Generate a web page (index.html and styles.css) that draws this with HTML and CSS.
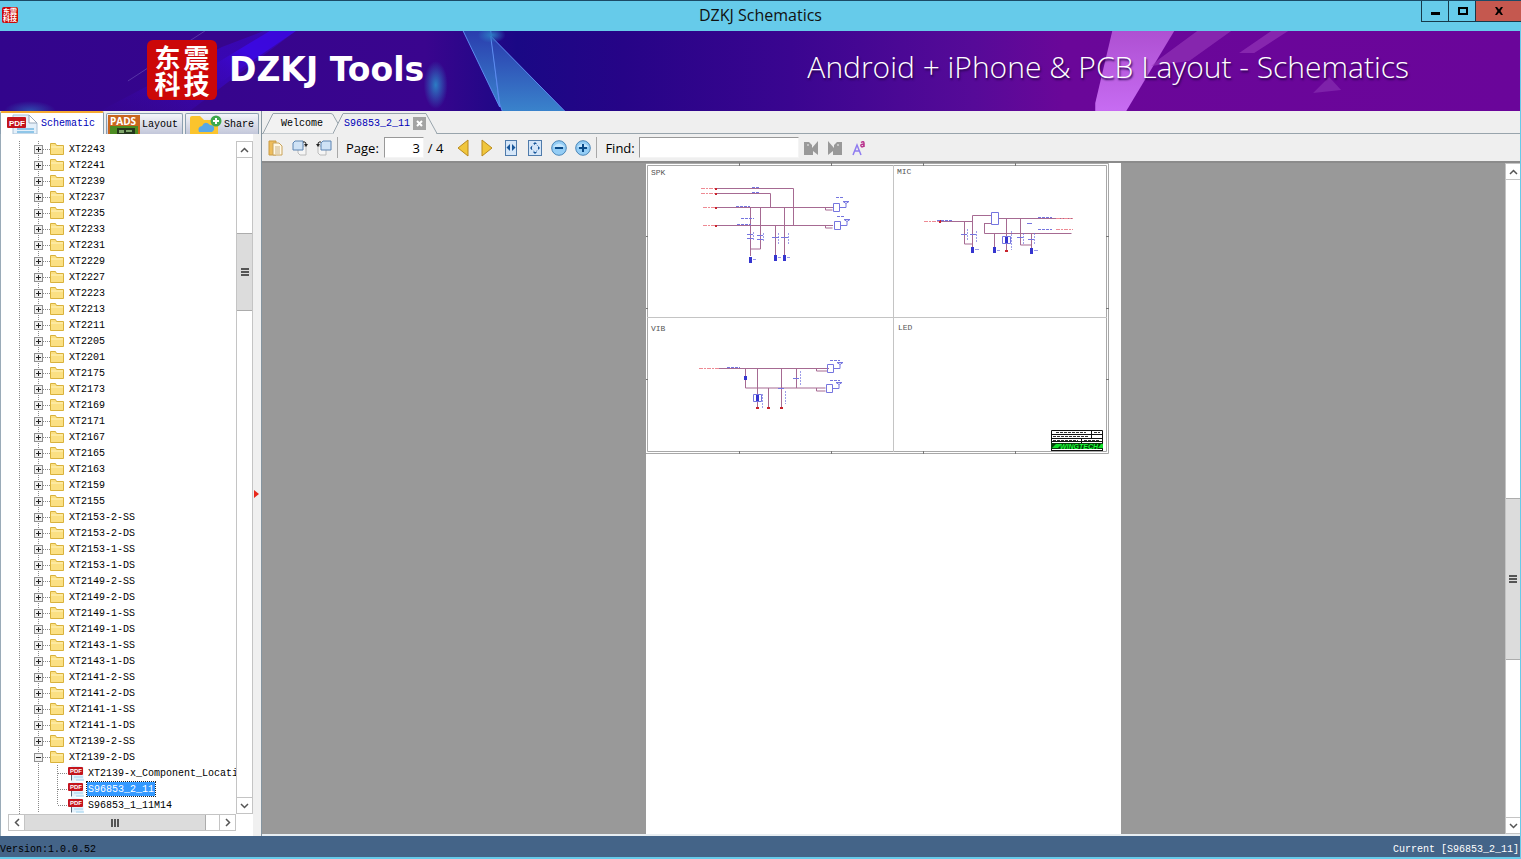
FILE: index.html
```
<!DOCTYPE html>
<html lang="en">
<head>
    <meta charset="UTF-8">
    <meta name="viewport" content="width=device-width, initial-scale=1.0">
    <title>DZKJ Schematics</title>
    <link rel="stylesheet" href="styles.css">
</head>
<body>
    <header class="titlebar">
        <div class="app-icon"><span>东</span><span>震</span><span>科</span><span>技</span></div>
        <h1>DZKJ Schematics</h1>
        <div class="window-buttons">
            <button aria-label="Minimize"><svg width="11" height="11"><path d="M1 6h9v3H1z"/></svg></button>
            <button aria-label="Maximize"><svg width="11" height="11"><path fill-rule="evenodd" d="M1 1h10v8H1zM3 3v4h6V3z"/></svg></button>
            <button class="close" aria-label="Close"><svg width="10" height="10"><path d="M1 1h2l2 2.500 2-2.500h2L6.500 5 9 9H7L5 6.500 3 9H1l2.500-4z"/></svg></button>
        </div>
    </header>

    <div class="banner">
        <svg class="banner-art" viewBox="0 0 1521 80" preserveAspectRatio="none" aria-hidden="true">
            <defs>
                <linearGradient id="base">
                    <stop offset="0" stop-color="#32058c"/>
                    <stop offset=".28" stop-color="#3a058e"/>
                    <stop offset=".34" stop-color="#1a0885"/>
                    <stop offset=".41" stop-color="#260487"/>
                    <stop offset=".52" stop-color="#3a0590"/>
                    <stop offset=".64" stop-color="#560a98"/>
                    <stop offset=".7" stop-color="#6a0799"/>
                    <stop offset="1" stop-color="#6a059a"/>
                </linearGradient>
                <linearGradient id="beam" x1="0" y1="1" x2="1" y2="0">
                    <stop offset="0" stop-color="#3d06b8" stop-opacity=".1"/>
                    <stop offset=".5" stop-color="#3b08e0"/>
                    <stop offset="1" stop-color="#3b08d8"/>
                </linearGradient>
                <linearGradient id="glass" x1="0" y1="0" x2="0" y2="1">
                    <stop offset="0" stop-color="#2a3cae"/>
                    <stop offset="1" stop-color="#3a84cc"/>
                </linearGradient>
                <linearGradient id="pink" x1="0" y1="0" x2="0" y2="1">
                    <stop offset="0" stop-color="#ae50d2"/>
                    <stop offset="1" stop-color="#c76cf2"/>
                </linearGradient>
                <radialGradient id="glow">
                    <stop offset="0" stop-color="#2c7cc4"/>
                    <stop offset="1" stop-color="#2c7cc4" stop-opacity="0"/>
                </radialGradient>
            </defs>
            <rect width="1521" height="80" fill="url(#base)"/>
            <path d="M100 80 222 16 264 0h32L190 80z" fill="url(#beam)" opacity=".45"/>
            <path d="M217 32 270 0h26L217 54z" fill="url(#beam)"/>
            <path d="m128 50 77-50" stroke="#6e55b8" opacity=".6"/>
            <ellipse cx="436" cy="54" rx="12" ry="24" fill="url(#glow)"/>
            <ellipse cx="30" cy="80" rx="26" ry="10" fill="url(#glow)" opacity=".6"/>
            <g fill="url(#glass)" stroke="#5c8cf0">
                <path d="M463-1h28l9 77z"/>
                <path d="m491 5 75 76h-63l-3-8z"/>
            </g>
            <ellipse cx="492" cy="4" rx="14" ry="8" fill="url(#glow)"/>
            <path d="M1113 0h62l-48 80h-31v-8z" fill="url(#pink)"/>
            <path d="m1160 28 38-28h34l-42 30-38 5zM1240 22l32-22h17l-34 22z" fill="#9a3cbc" opacity=".6"/>
            <path d="m1314 62 16-16 12 13z" fill="#7e22aa"/>
        </svg>
        <div class="logo"><span>东</span><span>震</span><span>科</span><span>技</span></div>
        <div class="brand">DZKJ Tools</div>
        <div class="slogan">Android + iPhone &amp; PCB Layout - Schematics</div>
    </div>

    <main>
        <aside>
            <div class="side-tabs">
                <button class="side-tab active">
                    <svg width="32" height="20" viewBox="0 0 32 20">
                        <path d="M6 1h16l8 8v11H6z" fill="#e4f0fa" stroke="#a9c2d8"/>
                        <path d="M22 1v8h8z" fill="#fff" stroke="#9ab"/>
                        <path d="M10 15h17M10 18h17" stroke="#8fc6e8" stroke-width="2"/>
                        <rect y="3" width="19" height="11" rx="1" fill="#c4141c"/>
                        <text x="2" y="12" font-size="8" font-weight="bold" fill="#fff" font-family="Liberation Sans, sans-serif">PDF</text>
                    </svg>
                    Schematic
                </button>
                <button class="side-tab">
                    <svg width="32" height="20" viewBox="0 0 32 20">
                        <path d="M0 1h32v19H0z" fill="#c9661e"/>
                        <path d="M2 12h28v8H2z" fill="#4c8c22"/>
                        <path d="M9 14h18v6H9z" fill="#23371c"/>
                        <path d="M11 16h5v3h-5zM18 16h6v2h-6z" fill="#7fa66b"/>
                        <text x="2" y="11" font-size="10" font-weight="bold" fill="#fff" font-family="Open Sans, sans-serif">PADS</text>
                    </svg>
                    Layout
                </button>
                <button class="side-tab">
                    <svg width="32" height="20" viewBox="0 0 32 20">
                        <path d="M0 20V4q0-2 2-2h8l4 4h11q3 0 3 3v11z" fill="#fbc42d"/>
                        <path d="M9 18q-2-5 3-6 3-6 8-1 5 0 4 5l-2 2z" fill="#58a8e8"/>
                        <circle cx="26" cy="7" r="5.500" fill="#3ea94c"/>
                        <path d="M26 4v6M23 7h6" stroke="#fff" stroke-width="2"/>
                    </svg>
                    Share
                </button>
            </div>
            <div class="tree-panel">
                <ul class="tree" id="tree"></ul>
                <div class="scrollbar vertical">
                    <button aria-label="Scroll up"><svg width="9" height="6"><path d="m1 5 3.500-3.500L8 5"/></svg></button>
                    <div class="before"></div>
                    <div class="thumb"><i></i></div>
                    <div class="after"></div>
                    <button aria-label="Scroll down"><svg width="9" height="6"><path d="m1 1 3.500 3.500L8 1"/></svg></button>
                </div>
                <div class="scrollbar horizontal">
                    <button aria-label="Scroll left"><svg width="6" height="9"><path d="M5 1 1.500 4.500 5 8"/></svg></button>
                    <div class="thumb"><i></i></div>
                    <div class="after"></div>
                    <button aria-label="Scroll right"><svg width="6" height="9"><path d="m1 1 3.500 3.500L1 8"/></svg></button>
                </div>
                <div class="splitter"><svg width="5" height="8"><path d="m0 0 5 4-5 4z" fill="#e8281c"/></svg></div>
            </div>
        </aside>

        <section class="workspace">
            <div class="doc-tabs">
                <button class="doc-tab welcome">
                    <svg width="76" height="22"><path d="M0 21.500h1L11 1.500h58q2 0 3 3l4 7v10" fill="#f2f2f2" stroke="#98a4ac"/></svg>
                    <span>Welcome</span>
                </button>
                <div class="doc-tab current">
                    <svg width="104" height="22"><path d="M0 21.500 10 1.500h83l11 20" fill="#efefef" stroke="#98a4ac"/><path d="M1 22h102" stroke="#efefef" stroke-width="2"/></svg>
                    <button class="doc-name">S96853_2_11</button>
                    <button class="doc-close" aria-label="Close tab"><svg width="7" height="7"><path d="m1 1 5 5m0-5L1 6" stroke="#fff" stroke-width="2"/></svg></button>
                </div>
            </div>

            <div class="toolbar">
                <button class="tool" aria-label="Open">
                    <svg width="16" height="16"><path d="M1 1h7v14H1z" fill="#eebd5c" stroke="#c99b45"/><path d="M5 3h6l3 3v9H5z" fill="#fff8e6" stroke="#c9a35a"/><path d="M7 7h5M7 9h5M7 11h5M7 13h5" stroke="#cbb48a"/></svg>
                </button>
                <button class="tool" aria-label="Rotate right">
                    <svg width="16" height="16"><path d="M6 6h8v9H8l-2-2z" fill="#f5f5f5" stroke="#bbb"/><path d="M3 1h8v9H1V3z" fill="#cfe2f5" stroke="#5d84b2"/><path d="M11 2h2q1 0 1 3" fill="none" stroke="#222"/><path d="M12 4h4l-2 3z" fill="#222"/></svg>
                </button>
                <button class="tool" aria-label="Rotate left">
                    <svg width="16" height="16"><path d="M2 6h8v9H4l-2-2z" fill="#f5f5f5" stroke="#bbb"/><path d="M7 1h8v9H5V3z" fill="#cfe2f5" stroke="#5d84b2"/><path d="M5 2H3Q2 2 2 5" fill="none" stroke="#222"/><path d="M0 4h4L2 7z" fill="#222"/></svg>
                </button>
                <span class="separator"></span>
                <label for="page">Page:</label>
                <input id="page" class="page" type="text" value="3">
                <span class="total">/ 4</span>
                <button class="tool" aria-label="Previous page">
                    <svg width="16" height="18"><path d="M13 1v16L3 9z" fill="#f0c63c" stroke="#b98a1d"/></svg>
                </button>
                <button class="tool" aria-label="Next page">
                    <svg width="16" height="18"><path d="M3 1v16l10-8z" fill="#f0c63c" stroke="#b98a1d"/></svg>
                </button>
                <button class="tool" aria-label="Fit width">
                    <svg width="16" height="18"><rect x="2.500" y="1.500" width="11" height="15" fill="#d5e6f8" stroke="#4f7bab"/><path d="M7 5v7L3.500 8.500zM9 5v7l3.500-3.500z" fill="#17569a"/></svg>
                </button>
                <button class="tool" aria-label="Fit page">
                    <svg width="16" height="18"><rect x="1.500" y="1.500" width="13" height="15" fill="#d5e6f8" stroke="#4f7bab"/><path d="m8 3 2 2H6zM8 15l2-2H6zM3 9l2-2v4zM13 9l-2-2v4z" fill="#17569a"/><circle cx="8" cy="9" r="3.500" fill="none" stroke="#17569a" stroke-dasharray="1 2"/></svg>
                </button>
                <button class="tool" aria-label="Zoom out">
                    <svg width="16" height="16"><circle cx="8" cy="8" r="7.300" fill="#94cdf5" stroke="#4a86b8"/><path d="M2 7q6-7 12 0" fill="#c4e5fc"/><path d="M4 8h8" stroke="#0a4a88" stroke-width="2"/></svg>
                </button>
                <button class="tool" aria-label="Zoom in">
                    <svg width="16" height="16"><circle cx="8" cy="8" r="7.300" fill="#94cdf5" stroke="#4a86b8"/><path d="M2 7q6-7 12 0" fill="#c4e5fc"/><path d="M4 8h8M8 4v8" stroke="#0a4a88" stroke-width="2"/></svg>
                </button>
                <span class="separator"></span>
                <label for="find">Find:</label>
                <input id="find" class="find" type="text">
                <button class="tool" aria-label="Find previous">
                    <svg width="16" height="16"><path d="M1 2h5l3 3v3l6-7v14l-5-4v4H1z" fill="#999"/><path d="M4 4h2v2H4z" fill="#c4c4c4"/></svg>
                </button>
                <button class="tool" aria-label="Find next">
                    <svg width="16" height="16"><path d="M15 2h-5L7 5v3L1 1v14l5-4v4h9z" fill="#999"/><path d="M10 4h2v2h-2z" fill="#c4c4c4"/></svg>
                </button>
                <button class="tool" aria-label="Match case">
                    <svg width="16" height="16"><path d="m2 15 4-10 4 10M3.500 11h5" fill="none" stroke="#8f7cf0" stroke-width="1.500"/><path d="M10 2.500q3-2 3 1V7m0-3q-4 0-3 2 1 2 3-.500" fill="none" stroke="#b8328c" stroke-width="1.500"/></svg>
                </button>
            </div>

            <div class="viewer">
                <div class="canvas">
                    <div class="paper">
                        <svg class="sheet" viewBox="0 0 475 292">
                            <g fill="none" stroke="#a8a8a8">
                                <path d="M0 .500h462.500v290H0M1.500 2.500h459v286H1.500z"/>
                                <path d="M1 154.500h460M247.500 2v287" stroke="#c4c4c4"/>
                                <path d="M93.500 0v3M185.500 0v3M277.500 0v3M369.500 0v3M93.500 288v3M185.500 288v3M277.500 288v3M369.500 288v3M0 73.500h2M0 145.500h2M0 216.500h2M460 73.500h3M460 145.500h3M460 216.500h3" stroke="#777"/>
                            </g>
                            <g class="sheet-label">
                                <text x="5" y="12">SPK</text>
                                <text x="251" y="11">MIC</text>
                                <text x="5" y="168">VIB</text>
                                <text x="252" y="167">LED</text>
                            </g>
                            <!-- nets -->
                            <g fill="none" stroke="#a66a92">
                                <path d="M70 25.500h77.500v37M70 30.500h54.500v14M70 44.500h117M70 62.500h117M104.500 44v49M114.500 44v42h-10M129.500 62v30M138.500 44v48M179.500 44v3h7M179.500 62v3h7"/>
                                <path d="M294 58.500h32M345 52.500h-18.500v34M318.500 58v23h8M338.500 60.500h7M338.500 60v10.500h87M353 55.500h73M348.500 70v16M360.500 55v32M374.500 55v27h11M385.500 70v17"/>
                                <path d="M73 205.500h110M99.500 205v20h80M111.500 205v40M122.500 225v20M135.500 205v40M150.500 205v20M170.500 205v3h11M170.500 225v3h9"/>
                            </g>
                            <g stroke="#ee8a94" stroke-dasharray="4 1 2 1">
                                <path d="M55 25.500h15M55 30.500h15M57 44.500h13M57 62.500h13M278 58.500h15M410 55.500h17M410 66.500h17M53 205.500h20"/>
                            </g>
                            <g fill="#c8232c">
                                <path d="M69 25h2v2h-2zM69 30h2v2h-2zM69 44h2v2h-2zM69 62h2v2h-2zM293 57h2v3h-2zM359 87h3v2h-3zM110 244h3v2h-3zM121 244h3v2h-3zM134 244h3v2h-3z"/>
                            </g>
                            <!-- parts -->
                            <g fill="none" stroke="#7575df">
                                <path d="M187.500 40.500h6v8h-6zM188.500 58.500h6v8h-6zM181.500 201.500h6v8h-6zM180.500 221.500h6v8h-6zM345.500 49.500h7v12h-7z"/>
                                <path d="M194 44.500h6v-4m-3-2h6l-3 2zM195 62.500h6v-4m-3-2h6l-3 2zM188 205.500h6v-4m-3-2h6l-3 2zM187 225.500h6v-4m-3-2h6l-3 2z"/>
                                <path d="M101 71.500h6M101 75.500h6M111 72.500h6M111 76.500h6M126 74.500h7M135 74.500h7M315 71.500h6M324 71.500h6M371 74.500h6M382 76.500h6M381 60.500h5M132 225.500h6M147 215.500h6M356.500 73.500h8v7h-8zM107.500 231.500h8v7h-8z"/>
                                <path d="M90 43.500h14M91 61.500h14M106 24.500h8M106 29.500h8M95 55.500h13M190 34.500h8M191 53.500h8M184 197.500h10M184 217.500h10M291 57.500h15M392 54.500h14M392 66.500h14M81 204.500h13" stroke-dasharray="3 1"/>
                                <path d="M107.500 69v9M117.500 70v9M132.500 70v12M142.500 70v12M321.500 66v12M330.500 68v12M377.500 70v12M388.500 70v12M365.500 68v19M116.500 231v14M139.500 228v13M154.500 208v14" stroke-dasharray="2 1" opacity=".7"/>
                            </g>
                            <g fill="#3535cf">
                                <path d="M103 94h3v6h-3zM128 92h3v6h-3zM137 92h3v6h-3zM325 84h3v6h-3zM347 84h3v6h-3zM384 85h3v6h-3zM359 74h3v6h-3zM110 232h3v6h-3zM98 213h3v4h-3z"/>
                                <path d="M107 96h3v1h-3zM132 94h3v1h-3zM141 94h3v1h-3zM329 86h4v1h-4zM351 87h3v1h-3zM388 87h4v1h-4z" opacity=".5"/>
                            </g>
                            <!-- title block -->
                            <g>
                                <path d="M405.500 267.500h51v20h-51zM405 271.500h51M405 275.500h51M405 278.500h51M445.500 267v8M435.500 276v5" fill="#fff" stroke="#111"/>
                                <path d="M410 269.500h30M448 269.500h6M407 273.500h36M407 277.500h25M438 277.500h15" stroke="#333" stroke-dasharray="3 1"/>
                                <path d="M405 280h52v6h-52z" fill="#053d0a"/>
                                <path d="m406 285 4-4h6l-4 4zM452 285l3-4h2v4z" fill="#12e02c"/>
                                <text x="414" y="286" font-size="7" font-weight="bold" font-style="italic" fill="#1cff3a" font-family="Liberation Sans, sans-serif">WINGTECH</text>
                                <path d="M405 287.500h52" stroke="#111" stroke-dasharray="5 1"/>
                            </g>
                        </svg>
                    </div>
                </div>
                <div class="scrollbar vertical page-scroll">
                    <button aria-label="Scroll up"><svg width="9" height="6"><path d="m1 5 3.500-3.500L8 5"/></svg></button>
                    <div class="before"></div>
                    <div class="thumb"><i></i></div>
                    <div class="after"></div>
                    <button aria-label="Scroll down"><svg width="9" height="6"><path d="m1 1 3.500 3.500L8 1"/></svg></button>
                </div>
            </div>
        </section>
    </main>

    <footer>
        <span class="version">Version:1.0.0.52</span>
        <span>Current [S96853_2_11]</span>
    </footer>

    <script>
        const folders = [
            'XT2243', 'XT2241', 'XT2239', 'XT2237', 'XT2235', 'XT2233', 'XT2231', 'XT2229',
            'XT2227', 'XT2223', 'XT2213', 'XT2211', 'XT2205', 'XT2201', 'XT2175', 'XT2173',
            'XT2169', 'XT2171', 'XT2167', 'XT2165', 'XT2163', 'XT2159', 'XT2155',
            'XT2153-2-SS', 'XT2153-2-DS', 'XT2153-1-SS', 'XT2153-1-DS',
            'XT2149-2-SS', 'XT2149-2-DS', 'XT2149-1-SS', 'XT2149-1-DS',
            'XT2143-1-SS', 'XT2143-1-DS', 'XT2141-2-SS', 'XT2141-2-DS',
            'XT2141-1-SS', 'XT2141-1-DS', 'XT2139-2-SS', 'XT2139-2-DS'
        ];
        const files = ['XT2139-x_Component_Location', 'S96853_2_11', 'S96853_1_11M14'];
        const openFolder = 'XT2139-2-DS';
        const selected = 'S96853_2_11';

        const folderIcon = '<svg class="folder" width="14" height="12"><path d="M.5 11.500v-11h5l1 2h7v9z" fill="#fbe083" stroke="#d9b23c"/><path d="M1 4h12" stroke="#fff3bd"/></svg>';
        const pdfIcon = '<svg class="pdf" width="16" height="16"><path d="M3.500 0v15.500h12V2" fill="#e3f1fb"/><path d="M3.500 10v5.500" stroke="#567"/><path d="M6 12h9M8 15h8" stroke="#9fd2ee"/><rect y="2" width="15" height="8" rx="1" fill="#c4141c"/><text x="2" y="8" font-size="6" font-weight="bold" fill="#fff" font-family="Liberation Sans, sans-serif">PDF</text></svg>';

        let rows = '';
        folders.forEach(function(name) {
            const open = name === openFolder;
            rows += '<li><button class="toggle' + (open ? ' open' : '') + '" aria-label="Toggle ' + name + '"></button>' +
                '<span class="branch"></span>' + folderIcon + '<span class="name">' + name + '</span></li>';
        });
        files.forEach(function(name, i) {
            rows += '<li class="file' + (i === files.length - 1 ? ' last' : '') + '"><span class="branch"></span>' + pdfIcon +
                '<span class="name' + (name === selected ? ' selected' : '') + '">' + name + '</span></li>';
        });
        document.getElementById('tree').innerHTML = rows;
    </script>
</body>
</html>
```
FILE: styles.css
```
* {
    box-sizing: border-box;
}
body {
    display: flex;
    flex-direction: column;
    height: 100vh;
    margin: 0;
    overflow: hidden;
    background-color: #66cbea;
    font-family: "Liberation Mono", monospace;
    font-size: 10px;
    color: #000;
}
button {
    padding: 0;
    border: none;
    background: none;
    font: inherit;
    color: inherit;
}
svg {
    display: block;
    flex: none;
}

/* window title */
.titlebar {
    display: grid;
    grid-template-columns: 1fr auto 1fr;
    height: 31px;
    flex: none;
    border-top: 1px solid #1b4a66;
}
.titlebar h1 {
    margin: 0;
    font: 16px/29px "Open Sans", sans-serif;
    color: #111;
}
.app-icon, .logo {
    display: grid;
    grid-template-columns: 1fr 1fr;
    background-color: #cc0808;
    color: #fff;
    font-family: "Noto Sans CJK SC", sans-serif;
    font-weight: bold;
    text-align: center;
}
.app-icon {
    width: 16px;
    height: 16px;
    margin: 6px 0 0 2px;
    padding: 1px;
    border-radius: 2px;
    font-size: 7px;
    line-height: 7px;
}
.window-buttons {
    display: flex;
    justify-self: end;
    height: 21px;
    border: 1px solid #16384a;
    border-width: 0 0 1px 1px;
}
.window-buttons button {
    display: grid;
    place-items: center;
    width: 27px;
    border-right: 1px solid #16384a;
}
.window-buttons .close {
    width: 45px;
    border: none;
    background-color: #c5584f;
}

/* banner */
.banner {
    position: relative;
    display: flex;
    align-items: center;
    height: 80px;
    flex: none;
    margin-right: 1px;
    padding: 0 111px 2px 147px;
    color: #fff;
}
.banner-art {
    position: absolute;
    inset: 0;
    width: 100%;
    height: 100%;
}
.logo, .brand, .slogan {
    position: relative;
}
.logo {
    width: 70px;
    height: 60px;
    padding: 4px 6px;
    border-radius: 6px;
    font-size: 26px;
    line-height: 26px;
}
.brand {
    margin-left: 12px;
    font: bold 33px/40px "DejaVu Sans", sans-serif;
}
.slogan {
    margin-left: auto;
    font: 300 30px/36px "Open Sans", sans-serif;
    text-shadow: 1px 2px 2px #2a0550;
    padding-bottom: 6px;
}

main {
    display: flex;
    flex: 1;
    min-height: 0;
    margin-right: 1px;
    background-color: #efefef;
}

/* left panel */
aside {
    display: flex;
    flex-direction: column;
    width: 262px;
    flex: none;
    border-right: 1px solid #8595a0;
}
.side-tabs {
    display: flex;
    align-items: flex-end;
    gap: 2px;
    height: 23px;
}
.side-tab {
    display: flex;
    align-items: center;
    gap: 2px;
    height: 21px;
    padding: 0 4px 0 1px;
    border: 1px solid #8b9fb0;
    border-bottom: none;
    border-radius: 2px 2px 0 0;
    background: linear-gradient(#f4f5f9, #c3c7da);
}
.side-tab:last-child {
    padding: 0 4px;
}
.side-tab.active {
    height: 23px;
    padding: 0 8px 0 6px;
    border-top: 2px solid #f5a930;
    background: #fff;
    color: #0000b8;
}
.tree-panel {
    display: grid;
    grid-template-columns: 1fr 17px 8px;
    grid-template-rows: 1fr 17px;
    flex: 1;
    min-height: 0;
    padding: 7px 0 5px 7px;
    border-left: 1px solid #9aabb8;
    background: linear-gradient(90deg, #fff 252px, #f0f0f0 252px);
}
.tree {
    margin: 0 0 0 1px;
    padding: 0;
    overflow: hidden;
    list-style: none;
    min-height: 0;
    background: repeating-linear-gradient(#888 0 1px, transparent 1px 2px) 10px 0 / 1px 100% no-repeat;
}
.tree li {
    position: relative;
    display: flex;
    align-items: center;
    height: 16px;
    padding-left: 25px;
    background: repeating-linear-gradient(#888 0 1px, transparent 1px 2px) 29px 0 / 1px 100% no-repeat;
    white-space: nowrap;
}
.toggle {
    width: 9px;
    height: 9px;
    flex: none;
    border: 1px solid #919191;
    background:
        linear-gradient(#222, #222) center / 5px 1px no-repeat,
        linear-gradient(#222, #222) center / 1px 5px no-repeat,
        #f0f0f0;
}
.toggle.open {
    background: linear-gradient(#222, #222) center / 5px 1px no-repeat, #f0f0f0;
}
.branch {
    width: 7px;
    height: 1px;
    flex: none;
    background: repeating-linear-gradient(90deg, #888 0 1px, transparent 1px 2px);
}
.tree .name {
    margin-left: 4px;
    padding: 2px 1px 0;
    line-height: 12px;
}
.file .branch {
    width: 10px;
}
.tree .file {
    padding-left: 49px;
    background:
        repeating-linear-gradient(#888 0 1px, transparent 1px 2px) 29px 0 / 1px 100% no-repeat,
        repeating-linear-gradient(#888 0 1px, transparent 1px 2px) 48px 0 / 1px 100% no-repeat;
}
.tree .last {
    background-size: 1px 100%, 1px 8px;
}
.tree .file .name {
    margin-left: 3px;
}
.name.selected {
    outline: 1px dotted #222;
    background-color: #3399ff;
    color: #fff;
}
.splitter {
    grid-column: 3;
    grid-row: 1;
    display: flex;
    align-items: center;
    padding: 33px 0 0 1px;
}

/* scroll bars */
.scrollbar {
    display: flex;
    background-color: #fff;
}
.scrollbar button {
    display: grid;
    place-items: center;
    width: 17px;
    height: 17px;
    flex: none;
    border: 1px solid #c4c4c4;
}
.scrollbar svg {
    fill: none;
    stroke: #555;
    stroke-width: 1.5;
}
.vertical {
    flex-direction: column;
    border: 1px solid #c4c4c4;
    border-width: 0 1px;
}
.vertical button {
    width: 100%;
    border-width: 1px 0;
}
.horizontal {
    border: 1px solid #c4c4c4;
    border-width: 1px 0;
}
.horizontal button {
    height: 100%;
    border-width: 0 1px;
}
.thumb {
    display: grid;
    place-items: center;
    border: 1px solid #acacac;
    background-color: #dcdcdc;
}
.vertical .thumb {
    flex: 77;
    border-width: 1px 0;
}
.vertical .before {
    flex: 75;
}
.vertical .after {
    flex: 488;
}
.horizontal .thumb {
    flex: 181;
    border-width: 0 1px 0 0;
}
.horizontal .after {
    flex: 13;
}
.page-scroll .before {
    flex: 321;
}
.page-scroll .thumb {
    flex: 161;
}
.page-scroll .after {
    flex: 159;
}
.thumb i {
    width: 8px;
    height: 8px;
    background: repeating-linear-gradient(#555 0 2px, transparent 2px 3px);
}
.horizontal .thumb i {
    background: repeating-linear-gradient(90deg, #555 0 2px, transparent 2px 3px);
}

/* right side */
.workspace {
    display: flex;
    flex-direction: column;
    flex: 1;
    min-width: 0;
}
.doc-tabs {
    display: flex;
    align-items: flex-end;
    height: 23px;
    flex: none;
    border-bottom: 1px solid #98a4ac;
}
.doc-tab {
    position: relative;
    display: flex;
    align-items: center;
    height: 21px;
}
.doc-tab > svg {
    position: absolute;
    left: 0;
    top: 0;
}
.welcome {
    width: 71px;
    padding: 2px 0 0 19px;
}
.welcome span {
    position: relative;
}
.current {
    width: 104px;
    padding: 2px 0 0 11px;
    gap: 3px;
    color: #0000b8;
}
.doc-name, .doc-close {
    position: relative;
}
.doc-close {
    display: grid;
    place-items: center;
    width: 13px;
    height: 13px;
    background-color: #a3a3a3;
}
.toolbar {
    display: flex;
    align-items: center;
    height: 27px;
    flex: none;
    padding-left: 2px;
    font-family: "Open Sans", sans-serif;
    font-size: 13px;
}
.tool {
    display: grid;
    place-items: center;
    width: 24px;
    height: 24px;
    flex: none;
}
.separator {
    width: 1px;
    height: 21px;
    margin: 0 8px 0 1px;
    background-color: #a8a8a8;
}
.toolbar input {
    height: 21px;
    padding: 0 3px;
    border: 1px solid #999;
    border-right-color: #f4f4f4;
    border-bottom-color: #f4f4f4;
    background-color: #fff;
    font: inherit;
}
.page {
    width: 40px;
    margin-left: 5px;
    text-align: right;
}
.find {
    width: 160px;
    margin-left: 4px;
}
.total {
    margin: 0 8px 0 4px;
}
.viewer {
    display: flex;
    flex: 1;
    min-height: 0;
    border-top: 2px solid #8b8b8b;
    border-bottom: 2px solid #e8eef2;
}
.canvas {
    display: flex;
    justify-content: center;
    flex: 1;
    background-color: #999;
}
.paper {
    width: 475px;
    background-color: #fff;
}
.sheet {
    width: 100%;
}
.sheet-label {
    font-family: "Liberation Mono", monospace;
    font-size: 8px;
    fill: #555;
}
.page-scroll {
    width: 15px;
    border-right: none;
}

/* status bar */
footer {
    display: flex;
    justify-content: space-between;
    align-items: center;
    height: 21px;
    flex: none;
    margin: 0 1px 2px 0;
    padding: 5px 1px 0 0;
    background-color: #446488;
    color: #fff;
}
.version {
    color: #000;
}
```
